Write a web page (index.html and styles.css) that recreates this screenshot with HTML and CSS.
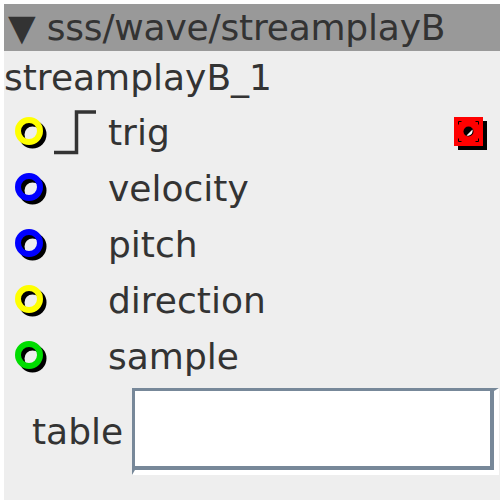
FILE: index.html
```html
<!DOCTYPE html>
<html>
    <head>
        <title>streamplayB</title>
        <link rel="stylesheet" href="styles.css">
    </head>
    <body>
        <div id="panel">
            <div class="header">▼ sss/wave/streamplayB</div>
            <div class="title">streamplayB_1</div>

            <div class="row">
                <svg class="jack" viewBox="0 0 32 32">
                    <circle cx="17.5" cy="17.5" r="11" class="shadow"/>
                    <circle cx="14" cy="14" r="11" stroke="#ffff00"/>
                </svg>
                <svg class="step" viewBox="0 0 44 48">
                    <path d="M0 44.5 H22.5 V4 H42"/>
                </svg>
                <span class="label">trig</span>
                <svg class="toggle" viewBox="0 0 34 34">
                    <rect x="4" y="4" width="29" height="29" fill="#000"/>
                    <rect x="0" y="0" width="29" height="29" fill="#ff0000"/>
                    <path d="M4.5 7.5 V4.5 H7.5 M21.5 4.5 H24.5 V7.5 M24.5 21.5 V24.5 H21.5 M7.5 24.5 H4.5 V21.5" class="frame"/>
                    <circle cx="14.5" cy="14.5" r="5" fill="#000"/>
                    <path d="M18.5 12.5 A5 5 0 0 1 12.5 18.5 Z" fill="#fff"/>
                </svg>
            </div>

            <div class="row">
                <svg class="jack" viewBox="0 0 32 32">
                    <circle cx="17.5" cy="17.5" r="11" class="shadow"/>
                    <circle cx="14" cy="14" r="11" stroke="#0000ff"/>
                </svg>
                <span class="spacer"></span>
                <span class="label">velocity</span>
            </div>

            <div class="row">
                <svg class="jack" viewBox="0 0 32 32">
                    <circle cx="17.5" cy="17.5" r="11" class="shadow"/>
                    <circle cx="14" cy="14" r="11" stroke="#0000ff"/>
                </svg>
                <span class="spacer"></span>
                <span class="label">pitch</span>
            </div>

            <div class="row">
                <svg class="jack" viewBox="0 0 32 32">
                    <circle cx="17.5" cy="17.5" r="11" class="shadow"/>
                    <circle cx="14" cy="14" r="11" stroke="#ffff00"/>
                </svg>
                <span class="spacer"></span>
                <span class="label">direction</span>
            </div>

            <div class="row">
                <svg class="jack" viewBox="0 0 32 32">
                    <circle cx="17.5" cy="17.5" r="11" class="shadow"/>
                    <circle cx="14" cy="14" r="11" stroke="#00dd00"/>
                </svg>
                <span class="spacer"></span>
                <span class="label">sample</span>
            </div>

            <div class="field">
                <label for="table">table</label>
                <div class="entry">
                    <div class="entry-inner"></div>
                </div>
            </div>
        </div>
    </body>
</html>
```

FILE: styles.css
```css
body {
    margin: 4px;
    background-color: white;
    color: #333333;
    font-family: "DejaVu Sans", sans-serif;
    font-size: 36px;
}

#panel {
    width: 496px;
    height: 496px;
    background-color: #eeeeee;
}

.header {
    height: 47px;
    line-height: 47px;
    padding-left: 4px;
    background-color: #999999;
    white-space: nowrap;
    letter-spacing: -0.2px;
}

.title {
    height: 53px;
    line-height: 53px;
    padding-left: 0;
}

.row {
    display: flex;
    align-items: center;
    height: 56px;
    padding-left: 11px;
    padding-right: 12px;
}

.jack {
    width: 32px;
    height: 32px;
    margin-right: 7px;
    margin-top: 2px;
}

.jack circle {
    fill: none;
    stroke-width: 6;
}

.jack .shadow {
    stroke: #000000;
}

.step {
    width: 44px;
    height: 48px;
    margin-right: 10px;
}

.step path {
    fill: none;
    stroke: #333333;
    stroke-width: 3.5;
}

.spacer {
    width: 54px;
}

.label {
    flex: 1;
}

.toggle {
    width: 34px;
    height: 34px;
    margin-top: 4px;
}

.toggle .frame {
    fill: none;
    stroke: #000000;
    stroke-width: 1;
}

.field {
    display: flex;
    align-items: center;
    padding-top: 4px;
    padding-left: 28px;
}

.field label {
    width: 100px;
}

.entry {
    width: 359px;
    height: 79px;
    border-top: 3px solid #778899;
    border-left: 3px solid #778899;
    border-right: 5px solid white;
    border-bottom: 5px solid white;
}

.entry-inner {
    height: 100%;
    background-color: white;
    border-right: 4px solid #778899;
    border-bottom: 4px solid #778899;
    box-sizing: border-box;
}
```
